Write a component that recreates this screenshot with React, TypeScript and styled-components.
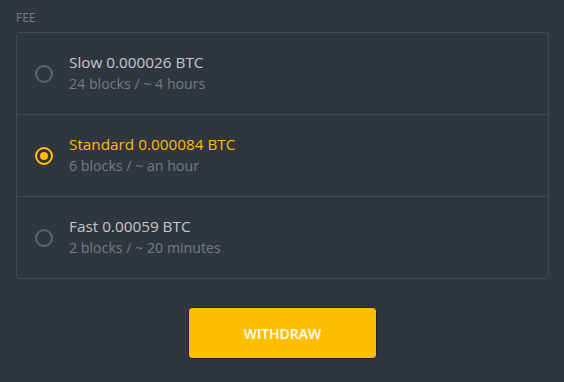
import React, { useState } from 'react';
import styled, { createGlobalStyle } from 'styled-components';

interface FeeOption {
  id: string;
  name: string;
  amount: string;
  eta: string;
}

const FeeOptions: FeeOption[] = [
  { id: 'slow', name: 'Slow', amount: '0.000026 BTC', eta: '24 blocks / ~ 4 hours' },
  { id: 'standard', name: 'Standard', amount: '0.000084 BTC', eta: '6 blocks / ~ an hour' },
  { id: 'fast', name: 'Fast', amount: '0.00059 BTC', eta: '2 blocks / ~ 20 minutes' },
];

const App: React.FC = () => {
  const [selected, setSelected] = useState('standard');

  return (
    <>
      <GlobalStyle />
      <Page>
        <Label>FEE</Label>
        <OptionList>
          {FeeOptions.map(option => (
            <Option key={option.id} onClick={() => setSelected(option.id)}>
              <Radio active={selected === option.id} />
              <OptionText>
                <Title active={selected === option.id}>
                  {option.name} {option.amount}
                </Title>
                <Eta>{option.eta}</Eta>
              </OptionText>
            </Option>
          ))}
        </OptionList>
        <Actions>
          <WithdrawButton>WITHDRAW</WithdrawButton>
        </Actions>
      </Page>
    </>
  );
};

const GlobalStyle = createGlobalStyle`
  html, body {
    margin: 0;
    background: #30363f;
  }
  body {
    font-family: 'Open Sans', 'Noto Sans', sans-serif;
  }
`;

const Page = styled.div`
  width: 564px;
  height: 382px;
  box-sizing: border-box;
  padding: 9px 15px 0 16px;
  background: #30363f;
`;

const Label = styled.div`
  font-size: 12px;
  line-height: 17px;
  color: #737b86;
  margin-bottom: 6px;
`;

const OptionList = styled.div`
  border: 1px solid #434a55;
  border-radius: 3px;
`;

const Option = styled.div`
  display: flex;
  align-items: center;
  height: 81px;
  padding-left: 18px;
  cursor: pointer;

  & + & {
    border-top: 1px solid #434a55;
  }
`;

const Radio = styled.span<{ active: boolean }>`
  position: relative;
  width: 14px;
  height: 14px;
  border-radius: 50%;
  border: 2px solid ${p => (p.active ? '#ffbd00' : '#5d656f')};
  margin-right: 16px;
  flex-shrink: 0;

  &::after {
    content: '';
    display: ${p => (p.active ? 'block' : 'none')};
    position: absolute;
    top: 3px;
    left: 3px;
    width: 8px;
    height: 8px;
    border-radius: 50%;
    background: #ffbd00;
  }
`;

const OptionText = styled.div`
  display: flex;
  flex-direction: column;
  margin-top: -1px;
`;

const Title = styled.span<{ active: boolean }>`
  font-size: 15.3px;
  line-height: 21px;
  color: ${p => (p.active ? '#ffbd00' : '#c4c8cd')};
`;

const Eta = styled.span`
  font-size: 14.2px;
  line-height: 22px;
  color: #737b86;
`;

const Actions = styled.div`
  display: flex;
  justify-content: center;
  padding-top: 28px;
`;

const WithdrawButton = styled.button`
  width: 189px;
  height: 52px;
  border: 1px solid #1d2230;
  border-radius: 4px;
  background: #ffbf00;
  color: #ffffff;
  font-family: 'Open Sans', 'Noto Sans', sans-serif;
  font-size: 14px;
  font-weight: 600;
  cursor: pointer;
`;

export default App;
